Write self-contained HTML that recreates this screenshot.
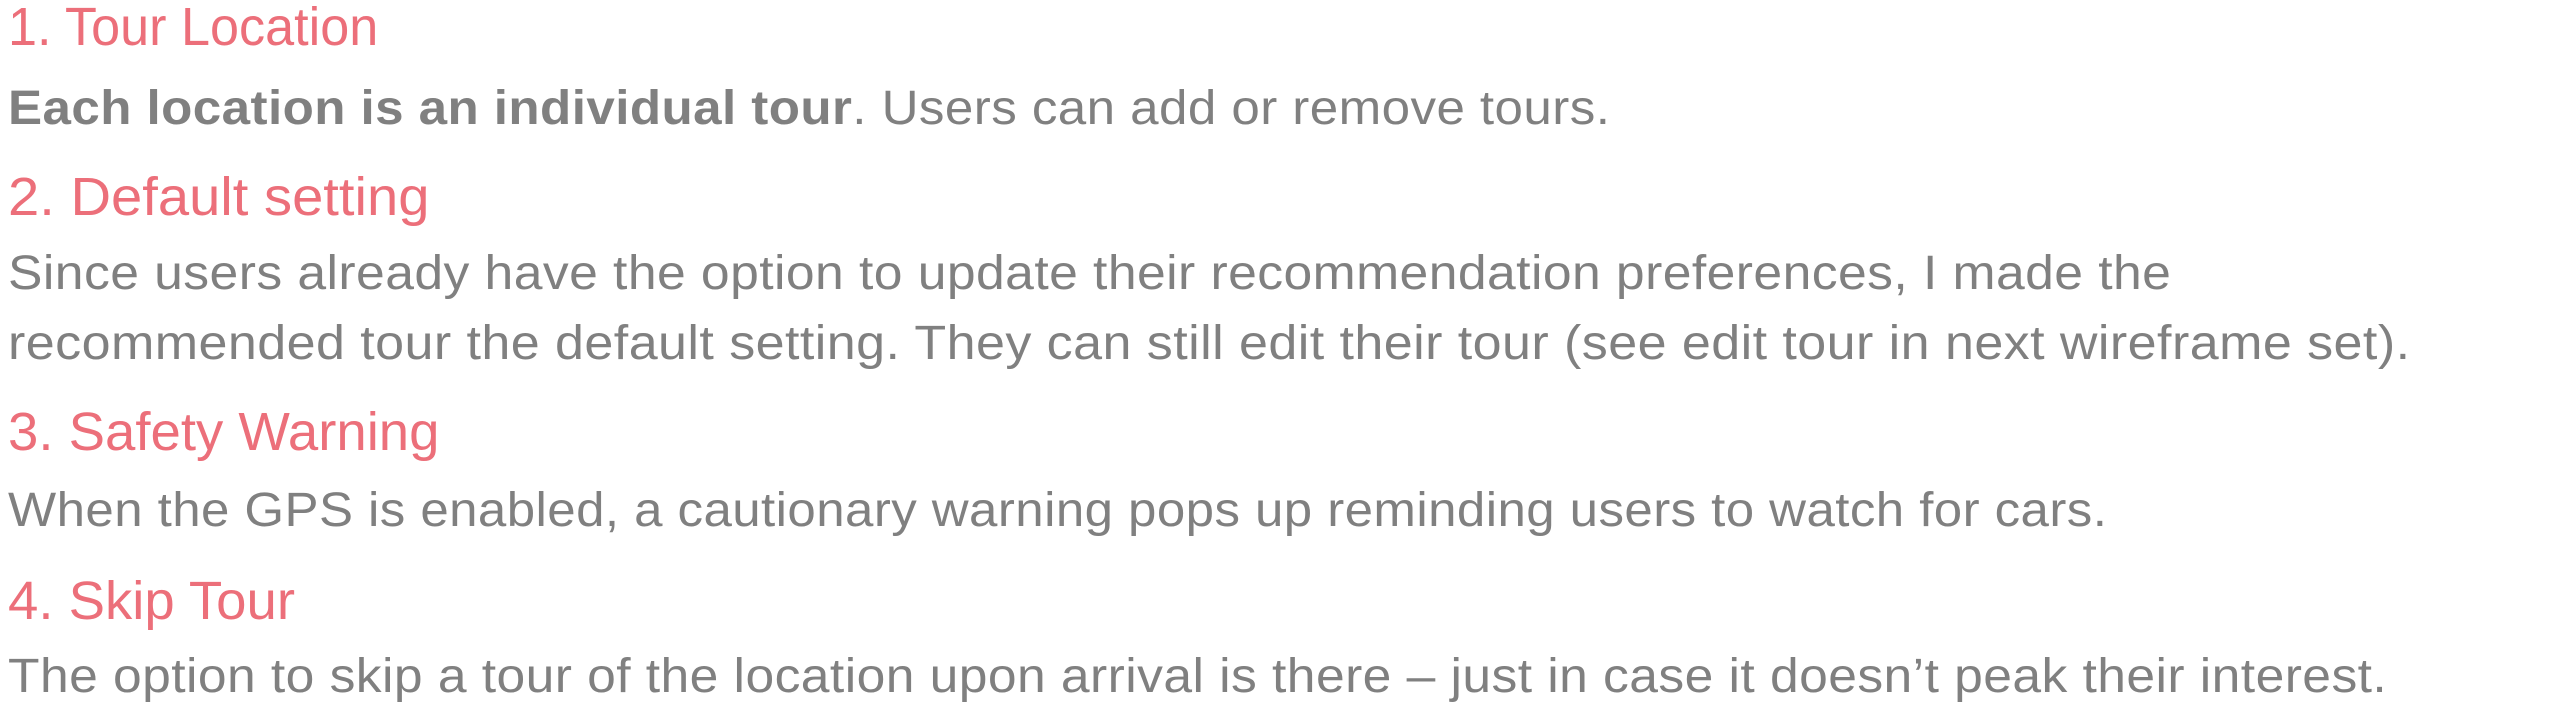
<!DOCTYPE html>
<html><head><meta charset="utf-8"><style>
html,body{margin:0;padding:0;background:#fff;width:2560px;height:715px;overflow:hidden;position:relative}
.b{position:absolute;left:8px;font-family:"Liberation Sans",sans-serif;font-size:48px;line-height:48px;color:#808080;white-space:nowrap;letter-spacing:0.4px;transform-origin:left top}
.h{position:absolute;left:8px;font-family:"Liberation Sans",sans-serif;font-size:54px;line-height:54px;color:#ec6f7a;white-space:nowrap;transform-origin:left top;}
</style></head><body>
<div class="h" style="top:0px;transform:scale(0.966,1)">1. Tour Location</div>
<div class="b" style="top:85px;transform:scaleX(1.065)"><b>Each location is an individual tour</b>. Users can add or remove tours.</div>
<div class="h" style="top:170px;transform:scale(1.04,1)">2. Default setting</div>
<div class="b" style="top:250px;transform:scaleX(1.076)">Since users already have the option to update their recommendation preferences, I made the</div>
<div class="b" style="top:320px;transform:scaleX(1.084)">recommended tour the default setting. They can still edit their tour (see edit tour in next wireframe set).</div>
<div class="h" style="top:405px;transform:scale(1.01,1)">3. Safety Warning</div>
<div class="b" style="top:487px;transform:scaleX(1.063)">When the GPS is enabled, a cautionary warning pops up reminding users to watch for cars.</div>
<div class="h" style="top:574px;transform:scale(1.01,1)">4. Skip Tour</div>
<div class="b" style="top:653px;transform:scaleX(1.075)">The option to skip a tour of the location upon arrival is there – just in case it doesn’t peak their interest.</div>
</body></html>
